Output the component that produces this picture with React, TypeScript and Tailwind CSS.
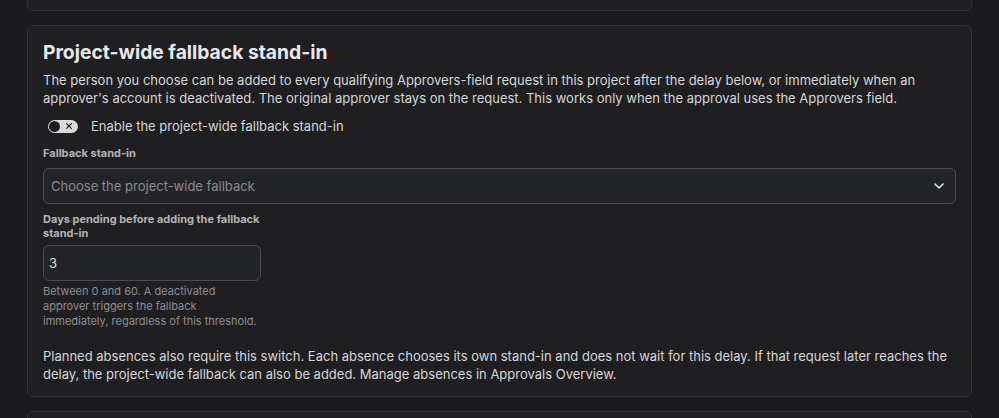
import { useState } from "react";

const font = { fontFamily: "Inter, 'Noto Sans', sans-serif" };

function Toggle({ on, onChange }: { on: boolean; onChange: (v: boolean) => void }) {
  return (
    <button
      type="button"
      onClick={() => onChange(!on)}
      className="relative w-[30px] h-[13px] rounded-full bg-[#dadada] flex items-center px-px shrink-0"
    >
      <span className="w-[11px] h-[11px] rounded-full bg-[#1e1e21]" />
      <svg viewBox="0 0 10 10" className="absolute right-[5px] top-[2.5px] w-[8px] h-[8px]">
        <path d="M2 2 L8 8 M8 2 L2 8" stroke="#1e1e21" strokeWidth="1.6" strokeLinecap="round" />
      </svg>
    </button>
  );
}

export default function App() {
  const [enabled, setEnabled] = useState(false);
  const [days, setDays] = useState("3");

  return (
    <div className="h-[418px] overflow-hidden bg-[#1b1b1d] px-[27px]" style={font}>
      <div className="flex flex-col gap-[14px] -mt-[40px]">
        {/* previous section */}
        <div className="h-[51px] rounded-md border border-[#303034] bg-[#1f1f22]" />

        <section className="rounded-md border border-[#303034] bg-[#1f1f22] px-[15px] pt-4 pb-[13px]">
          <h2 className="text-[19.3px] leading-5 font-bold text-[#e8e8e8]">Project-wide fallback stand-in</h2>
          <p className="mt-[8.5px] text-[13px] leading-[18.4px] text-[#d6d6d6]">
            The person you choose can be added to every qualifying Approvers-field request in this project after the delay
            below, or immediately when an approver's account is deactivated. The original approver stays on the request. This
            works only when the approval uses the Approvers field.
          </p>

          <div className="mt-[9px] h-5 flex items-center gap-[13px] pl-[5px]">
            <Toggle on={enabled} onChange={setEnabled} />
            <span className="text-[13px] text-[#d6d6d6]">Enable the project-wide fallback stand-in</span>
          </div>

          <label className="block mt-[10px] text-[11px] leading-[15px] font-bold text-[#b3b3b3]">Fallback stand-in</label>
          <div className="mt-[7px] h-9 rounded-md border border-[#4b4b50] bg-[#232427] flex items-center pl-[7px] pr-[11px]">
            <span className="flex-1 text-[13px] text-[#8a8a8e]">Choose the project-wide fallback</span>
            <svg viewBox="0 0 10 6" className="w-[10px] h-[6px]">
              <path d="M1 1 L5 5 L9 1" fill="none" stroke="#e6e6e6" strokeWidth="1.6" strokeLinecap="round" strokeLinejoin="round" />
            </svg>
          </div>

          <div className="w-[218px]">
            <label className="block mt-[7.5px] text-[11px] leading-[14px] font-bold text-[#b3b3b3]">
              Days pending before adding the fallback stand-in
            </label>
            <input
              value={days}
              onChange={(e) => setDays(e.target.value)}
              className="mt-[5px] w-full h-9 rounded-md border border-[#4b4b50] bg-[#232427] pl-[5px] text-[13px] text-[#dcdcdc] outline-none"
            />
            <p className="mt-[3.5px] text-[11px] leading-[14.6px] text-[#8c8c90]">
              Between 0 and 60. A deactivated approver triggers the fallback immediately, regardless of this threshold.
            </p>
          </div>

          <p className="mt-[18.5px] text-[13px] leading-[18.4px] text-[#d6d6d6]">
            Planned absences also require this switch. Each absence chooses its own stand-in and does not wait for this delay.
            If that request later reaches the delay, the project-wide fallback can also be added. Manage absences in Approvals
            Overview.
          </p>
        </section>

        {/* next section */}
        <div className="h-[60px] rounded-md border border-[#303034] bg-[#1f1f22]" />
      </div>
    </div>
  );
}
